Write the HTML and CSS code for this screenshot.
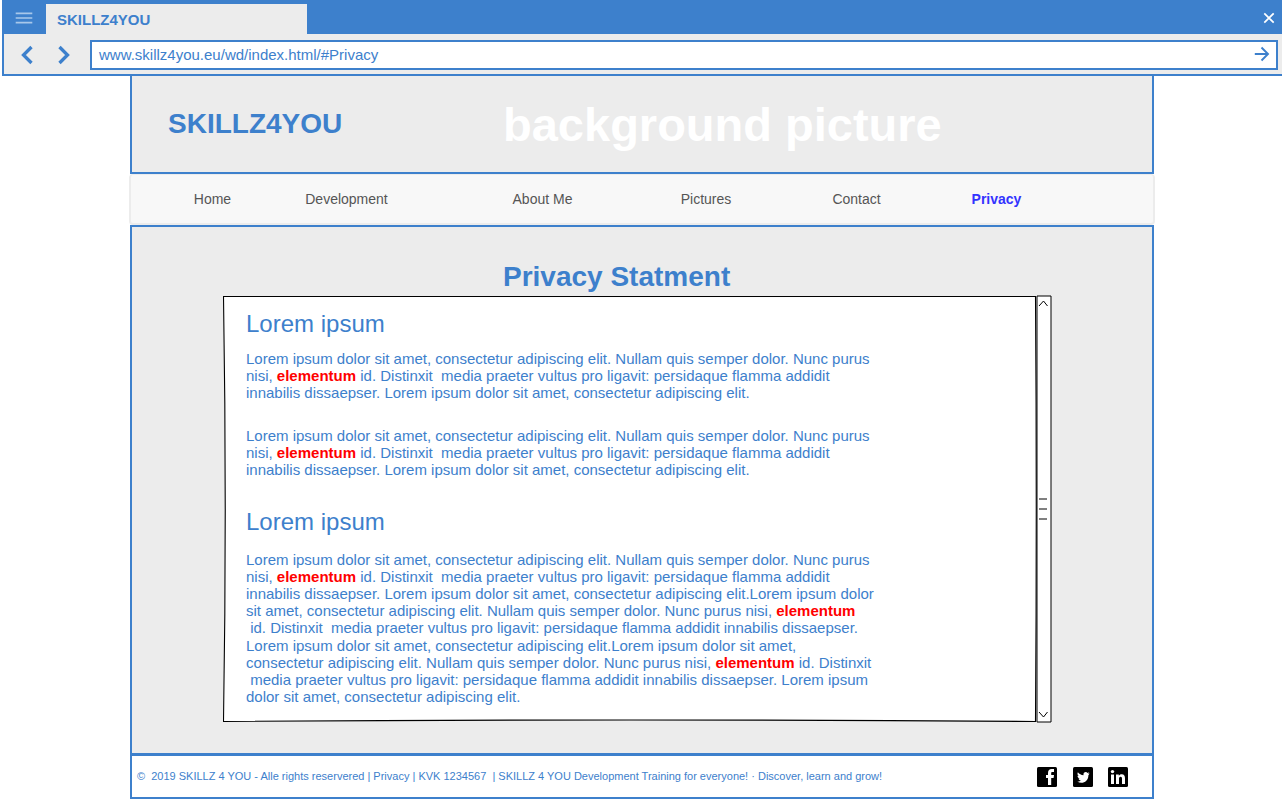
FILE: index.html
```html
<!DOCTYPE html>
<html lang="en">
<head>
<meta charset="utf-8">
<title>SKILLZ4YOU</title>
<link rel="stylesheet" href="styles.css">
</head>
<body>
<div class="browser">
  <div class="tabs">
    <svg class="menu" width="18" height="14" viewBox="0 0 18 14"><path d="M.7 2.3H17.300M.7 7H17.300M.7 11.700H17.300"/></svg>
    <div class="tab">SKILLZ4YOU</div>
    <svg class="close" width="12" height="12" viewBox="0 0 12 12"><path d="M1.300 1.300L10.700 10.700M10.700 1.300L1.300 10.700"/></svg>
  </div>
  <div class="toolbar">
    <svg class="chevron" width="14" height="20" viewBox="0 0 14 20"><path d="M11.500 2L3.500 10L11.500 18"/></svg>
    <svg class="chevron" width="14" height="20" viewBox="0 0 14 20"><path d="M2.500 2L10.500 10L2.500 18"/></svg>
    <div class="address">
      <span>www.skillz4you.eu/wd/index.html/#Privacy</span>
      <svg class="go" width="16" height="16" viewBox="0 0 16 16"><path d="M.8 8H14M7.500 1.500L14 8L7.500 14.500"/></svg>
    </div>
  </div>
</div>
<div class="page">
  <header class="banner">
    <div class="brand">SKILLZ4YOU</div>
    <div class="backdrop">background picture</div>
  </header>
  <nav class="nav">
    <a>Home</a><a>Development</a><a>About Me</a><a>Pictures</a><a>Contact</a><a class="active">Privacy</a>
  </nav>
  <main class="main">
    <h1>Privacy Statment</h1>
    <div class="reader">
      <article class="sheet">
        <svg class="outline" width="814" height="428" viewBox="0 0 814 428"><path d="M.5 1.500Q407 3 812.500 1.500Q814 214 812.500 426.500Q407 423.500 .5 426.500Q4 214 .5 1.500Z"/></svg>
        <div class="copy">
<h2>Lorem ipsum</h2>
<p>Lorem ipsum dolor sit amet, consectetur adipiscing elit. Nullam quis semper dolor. Nunc purus
nisi, <b>elementum</b> id. Distinxit  media praeter vultus pro ligavit: persidaque flamma addidit
innabilis dissaepser. Lorem ipsum dolor sit amet, consectetur adipiscing elit.</p>
<p>Lorem ipsum dolor sit amet, consectetur adipiscing elit. Nullam quis semper dolor. Nunc purus
nisi, <b>elementum</b> id. Distinxit  media praeter vultus pro ligavit: persidaque flamma addidit
innabilis dissaepser. Lorem ipsum dolor sit amet, consectetur adipiscing elit.</p>
<h2 class="second">Lorem ipsum</h2>
<p>Lorem ipsum dolor sit amet, consectetur adipiscing elit. Nullam quis semper dolor. Nunc purus
nisi, <b>elementum</b> id. Distinxit  media praeter vultus pro ligavit: persidaque flamma addidit
innabilis dissaepser. Lorem ipsum dolor sit amet, consectetur adipiscing elit.Lorem ipsum dolor
sit amet, consectetur adipiscing elit. Nullam quis semper dolor. Nunc purus nisi, <b>elementum</b>
 id. Distinxit  media praeter vultus pro ligavit: persidaque flamma addidit innabilis dissaepser.
Lorem ipsum dolor sit amet, consectetur adipiscing elit.Lorem ipsum dolor sit amet,
consectetur adipiscing elit. Nullam quis semper dolor. Nunc purus nisi, <b>elementum</b> id. Distinxit
 media praeter vultus pro ligavit: persidaque flamma addidit innabilis dissaepser. Lorem ipsum
dolor sit amet, consectetur adipiscing elit.</p>
        </div>
      </article>
      <svg class="scrollbar" width="16" height="428" viewBox="0 0 16 428"><path class="rail" d="M1 1H15V427H1Z"/><path class="grip" d="M3 204H11M3 214H11M3 224H11"/><path class="arrow" d="M3 11L7.500 6L11.500 11M3 417L7.500 422L11.500 417"/></svg>
    </div>
  </main>
  <footer class="footer">
    <div class="legal">©  2019 SKILLZ 4 YOU - Alle rights reservered | Privacy | KVK 1234567  | SKILLZ 4 YOU Development Training for everyone! · Discover, learn and grow!</div>
    <div class="social">
      <svg width="20" height="20" viewBox="0 0 20 20"><rect width="20" height="20" rx="1.500"/><path class="mark" d="M11 18V11H9V8H11V6C11 3.500 12.400 2 14.700 2H17V5H15.400C14.500 5 14.200 5.300 14.200 6.200V8H17L16.600 11H14.200V18Z"/></svg>
      <svg width="20" height="20" viewBox="0 0 20 20"><rect width="20" height="20" rx="1.500"/><path class="mark" d="M16.700 6.400C16.200 6.600 15.700 6.800 15.100 6.800C15.700 6.500 16.100 5.900 16.300 5.300L14.600 5.900C13 4.200 10 5.400 10.500 8.200C8.300 8.100 6.200 7 4.900 5.300C4.100 6.600 4.500 8.200 5.800 9.100L4.500 8.700C4.500 10.100 5.400 11.200 6.800 11.600L5.500 11.700C5.900 12.800 6.800 13.500 8.100 13.500C7 14.400 5.600 14.800 4.100 14.600C9.300 17.800 15.400 14.600 15.400 8.200Z"/></svg>
      <svg width="20" height="20" viewBox="0 0 20 20"><rect width="20" height="20" rx="1.500"/><circle class="mark" cx="4.500" cy="4.600" r="1.700"/><path class="mark" d="M3 7.500H6V17H3ZM8 7.500H10.800V8.800C11.400 7.800 12.300 7.200 13.700 7.200C16.300 7.200 17 9 17 11.500V17H14V12C14 10.800 13.900 9.800 12.600 9.800C11.300 9.800 11 10.800 11 12V17H8Z"/></svg>
    </div>
  </footer>
</div>
</body>
</html>
```

FILE: styles.css
```css
* { box-sizing: border-box; }
body {
  margin: 0;
  background: #fff;
  color: #3d80cc;
  font-family: "Liberation Sans", Arial, sans-serif;
  overflow: hidden;
}
svg { display: block; flex: none; fill: none; }
.browser {
  margin-left: 2px;
  height: 76px;
  border-left: 2px solid #3d80cc;
  border-bottom: 2px solid #3d80cc;
  background: #ececec;
}
.tabs {
  height: 34px;
  display: flex;
  background: #3d80cc;
}
.menu { margin: 11px 13px 0 11px; stroke: #a8c7ea; stroke-width: 1.700; }
.tab {
  width: 261px;
  margin-top: 4px;
  padding-left: 11px;
  background: #ececec;
  font-size: 15px;
  font-weight: bold;
  line-height: 32px;
}
.close { margin: 12px 7px 0 auto; stroke: #fff; stroke-width: 1.700; }
.toolbar {
  height: 40px;
  display: flex;
  padding: 6px 4px 4px 15.500px;
}
.chevron { margin: 5px 23px 0 0; stroke: #3d80cc; stroke-width: 3.300; }
.chevron + .chevron { margin-right: 19.500px; }
.address {
  flex: 1;
  height: 30px;
  border: 2px solid #3d80cc;
  background: #fff;
  display: flex;
  justify-content: space-between;
  padding: 0 6px 0 7px;
  font-size: 15px;
  line-height: 26px;
}
.go { margin-top: 4px; stroke: #3d80cc; stroke-width: 1.900; }
.page { width: 1024px; margin-left: 130px; }
.banner {
  height: 98px;
  border: 2px solid #3d80cc;
  border-top: 0;
  background: #ececec;
  display: flex;
  font-weight: bold;
}
.brand { width: 371px; padding-left: 36px; font-size: 28px; line-height: 96px; }
.backdrop { color: #fff; font-size: 47px; line-height: 98px; }
.nav {
  height: 51px;
  margin: 0 -1px;
  padding-left: 27px;
  border: 2px solid #ececec;
  border-top-width: 1px;
  border-radius: 4px;
  background: #f8f8f8;
  display: grid;
  grid-template-columns: 109px 159px 233px 94px 207px 73px;
  text-align: center;
  color: #555;
  font-size: 14px;
  line-height: 49px;
}
.nav .active { color: #3333ff; font-weight: bold; }
.main {
  height: 530px;
  border: 2px solid #3d80cc;
  background: #ececec;
}
h1 { margin: 34px 0 0 371px; font-size: 28px; line-height: 32px; }
.reader { display: flex; margin: 2px 0 0 91px; }
.sheet { position: relative; width: 813px; height: 428px; }
.outline { position: absolute; inset: 0; fill: #fff; stroke: #000; stroke-width: 1.100; }
.copy { position: relative; padding: 15px 0 0 23px; }
h2 { margin: 0; font-size: 24px; font-weight: normal; line-height: 28px; }
.second { margin-top: 30px; }
p {
  margin: 12px 0 0;
  font-size: 15px;
  line-height: 17px;
  white-space: pre;
}
p + p { margin-top: 26px; }
.second + p { margin-top: 14.900px; line-height: 17.130px; }
b { color: #f00; }
.rail { fill: #fff; stroke: #000; stroke-width: 1; }
.grip, .arrow { stroke: #000; stroke-width: 1; }
.footer {
  height: 45px;
  margin-top: -1px;
  border: 2px solid #3d80cc;
  background: #fff;
  display: flex;
  justify-content: space-between;
  padding: 0 24px 0 5px;
}
.legal { font-size: 11.015px; line-height: 41px; white-space: pre; }
.social { display: flex; padding-top: 11px; }
.social svg + svg { margin-left: 16px; }
.social svg:last-child { margin-left: 15px; }
.social rect { fill: #000; }
.mark { fill: #fff; }
```
